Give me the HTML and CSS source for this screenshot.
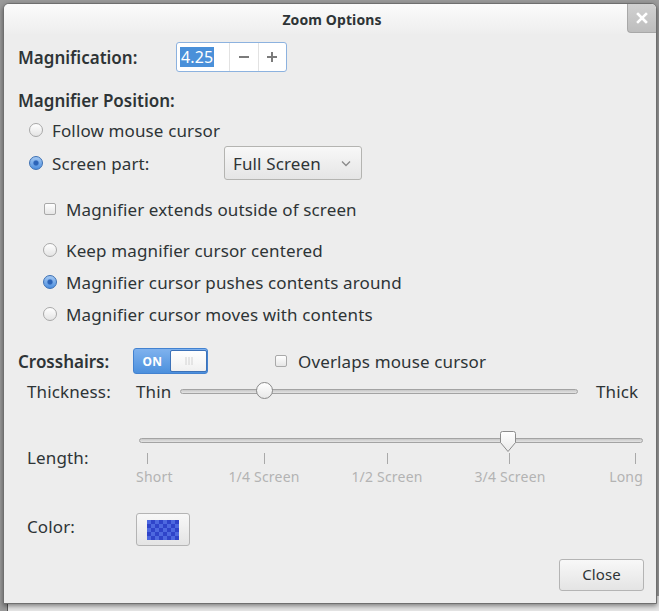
FILE: index.html
```html
<!DOCTYPE html>
<html>
<head>
<meta charset="utf-8">
<link rel="stylesheet" href="styles.css">
</head>
<body>
<div class="behind"></div>
<div class="window">
  <div class="titlebar">
    <span class="title">Zoom Options</span>
    <div class="wclose">
      <svg width="12" height="12" viewBox="0 0 12 12"><path d="M2 2 L10 10 M10 2 L2 10" stroke="#fff" stroke-width="2.6" stroke-linecap="square"/></svg>
    </div>
  </div>
  <div class="content">
    <div class="mag">
      <span class="label bold">Magnification:</span>
      <div class="spin">
        <div class="entry"><span class="sel">4.25</span></div>
        <div class="sbtn"><svg width="12" height="12" viewBox="0 0 12 12"><path d="M1 6 H11" stroke="#7b7b7b" stroke-width="2"/></svg></div>
        <div class="sbtn"><svg width="12" height="12" viewBox="0 0 12 12"><path d="M1 6 H11 M6 1 V11" stroke="#7b7b7b" stroke-width="2"/></svg></div>
      </div>
    </div>

    <div class="section bold">Magnifier Position:</div>

    <div class="opt lvl1 follow"><span class="radio"></span>Follow mouse cursor</div>
    <div class="opt lvl1 screen">
      <span class="radio on"></span>
      <span class="screen-label">Screen part:</span>
      <div class="combo">
        <span>Full Screen</span>
        <svg width="10" height="7" viewBox="0 0 10 7"><path d="M1 1.5 L5 5.5 L9 1.5" fill="none" stroke="#8a8a8a" stroke-width="1.3"/></svg>
      </div>
    </div>

    <div class="opt lvl2 extends"><span class="checkwrap"><span class="check"></span></span>Magnifier extends outside of screen</div>

    <div class="opt lvl2 keep"><span class="radio"></span>Keep magnifier cursor centered</div>
    <div class="opt lvl2 pushes"><span class="radio on"></span>Magnifier cursor pushes contents around</div>
    <div class="opt lvl2 moves"><span class="radio"></span>Magnifier cursor moves with contents</div>

    <div class="cross">
      <span class="cross-label bold">Crosshairs:</span>
      <div class="switch">
        <span class="on-label">ON</span>
        <span class="knob">
          <svg width="10" height="10" viewBox="0 0 10 10"><path d="M2 1 V9 M5 1 V9 M8 1 V9" stroke="#d2d2d2" stroke-width="1"/></svg>
        </span>
      </div>
      <span class="check overlap-check"></span>
      <span class="overlap-text">Overlaps mouse cursor</span>
    </div>

    <div class="thick">
      <span class="sub-label">Thickness:</span>
      <span class="thin-text">Thin</span>
      <div class="hslider">
        <div class="track"></div>
        <span class="round-handle"></span>
      </div>
      <span class="thick-text">Thick</span>
    </div>

    <div class="length">
      <span class="sub-label length-label">Length:</span>
      <div class="scale">
        <div class="scale-slider">
          <div class="track"></div>
          <svg class="ptr-handle" width="18" height="23" viewBox="0 0 18 23">
            <defs><linearGradient id="hg" x1="0" y1="0" x2="0" y2="1"><stop offset="0" stop-color="#ffffff"/><stop offset="1" stop-color="#e9e9e9"/></linearGradient></defs>
            <path d="M1.5 3.5 Q1.5 1.5 3.5 1.5 H14.5 Q16.5 1.5 16.5 3.5 V12.5 L9 21.5 L1.5 12.5 Z" fill="url(#hg)" stroke="#8c8c8c" stroke-width="1"/>
          </svg>
        </div>
        <div class="ticks">
          <span class="tick" style="left:8px"></span>
          <span class="tick" style="left:125px"></span>
          <span class="tick" style="left:248px"></span>
          <span class="tick" style="left:370px"></span>
          <span class="tick" style="left:496px"></span>
        </div>
        <div class="marks">
          <span class="mark first">Short</span>
          <span class="mark mid" style="left:125px">1/4 Screen</span>
          <span class="mark mid" style="left:248px">1/2 Screen</span>
          <span class="mark mid" style="left:371px">3/4 Screen</span>
          <span class="mark last">Long</span>
        </div>
      </div>
    </div>

    <div class="color-row">
      <span class="sub-label color-label">Color:</span>
      <div class="color-btn"><span class="swatch"></span></div>
    </div>

    <div class="actions">
      <div class="close-btn">Close</div>
    </div>
  </div>
</div>
</body>
</html>
```

FILE: styles.css
```css
* { box-sizing: border-box; }
html, body { margin: 0; padding: 0; }
body {
  width: 659px;
  height: 611px;
  overflow: hidden;
  background: #9a9a9a;
  font-family: "Noto Sans", "Open Sans", sans-serif;
  color: #2e3436;
  position: relative;
}
.behind {
  position: absolute;
  left: 7px;
  top: 596px;
  width: 652px;
  height: 30px;
  background: #e6e6e6;
  border-left: 1px solid #555;
}
.window {
  position: relative;
  margin: 3px 0 0 3px;
  width: 654px;
  height: 601px;
  background: #ededed;
  border: 1px solid #6f6f6f;
  border-radius: 6px 6px 0 0;
  box-shadow: 0 2px 5px rgba(0,0,0,0.45);
  display: flex;
  flex-direction: column;
  overflow: hidden;
}
.titlebar {
  position: relative;
  height: 30px;
  flex-shrink: 0;
  display: flex;
  align-items: center;
  justify-content: center;
  background: linear-gradient(#fbfbfb, #eeeeee);
}
.title { font-size: 14px; font-weight: 700; color: #2e3436; letter-spacing: 0.1px; padding-left: 4px; }
.wclose {
  position: absolute;
  right: 0;
  top: -1px;
  width: 29px;
  height: 30px;
  background: linear-gradient(#d2d2d2, #bdbdbd);
  border-left: 1px solid #a8a8a8;
  border-bottom: 1px solid #a8a8a8;
  border-radius: 0 5px 0 4px;
  display: flex;
  align-items: center;
  justify-content: center;
}
.content {
  flex: 1;
  display: flex;
  flex-direction: column;
  padding: 8px 12px 0 14px;
  font-size: 17px;
  letter-spacing: 0.13px;
}
.bold { font-weight: 600; letter-spacing: 0; }

.mag { display: flex; align-items: center; height: 30px; }
.mag .label { width: 158px; }
.spin {
  display: flex;
  width: 111px;
  height: 30px;
  border: 1px solid #8cb2df;
  border-radius: 3px;
  background: #fff;
}
.entry { width: 53px; display: flex; align-items: center; padding-left: 3px; }
.sel {
  background: #4a90d9;
  color: #fff;
  font-size: 16px;
  line-height: 20px;
  padding: 0 1px;
}
.sbtn {
  width: 29px;
  border-left: 1px solid #e2e2e2;
  display: flex;
  align-items: center;
  justify-content: center;
}

.section { margin-top: 17px; height: 24px; line-height: 24px; }

.opt { display: flex; align-items: center; height: 24px; }
.lvl1 { padding-left: 11px; }
.lvl2 { padding-left: 25px; }
.follow { margin-top: 5px; }
.screen { margin-top: 4px; height: 34px; }
.extends { margin-top: 17px; }
.keep { margin-top: 17px; }
.pushes { margin-top: 8px; }
.moves { margin-top: 8px; }

.radio {
  width: 14px;
  height: 14px;
  flex-shrink: 0;
  border-radius: 50%;
  border: 1px solid #a8a8a8;
  background: linear-gradient(#ffffff, #e4e4e4);
  margin-right: 9px;
}
.radio.on {
  border-color: #3b6fb3;
  background: radial-gradient(circle, #2c64b8 0 2px, rgba(44,100,184,0) 3.2px), linear-gradient(#a4c8f2, #4d8fdf);
}
.checkwrap {
  width: 14px;
  height: 14px;
  margin-right: 9px;
  display: flex;
  align-items: center;
  justify-content: center;
  flex-shrink: 0;
}
.check {
  width: 12px;
  height: 12px;
  flex-shrink: 0;
  border: 1px solid #a9a9a9;
  border-radius: 2px;
  background: linear-gradient(#ffffff, #e6e6e6);
}
.screen-label { width: 172px; }
.combo {
  width: 138px;
  height: 34px;
  border: 1px solid #b4b4b1;
  border-radius: 3px;
  background: linear-gradient(#f8f8f8, #e5e5e5);
  display: flex;
  align-items: center;
  justify-content: space-between;
  padding: 0 10px 0 8px;
}

.cross { display: flex; align-items: center; height: 26px; margin-top: 22px; }
.cross-label { width: 115px; }
.switch {
  width: 75px;
  height: 26px;
  display: flex;
  align-items: stretch;
  padding: 1px 0 1px 1px;
  border: 1px solid #4382d0;
  border-radius: 3px;
  background: linear-gradient(#7fb2ee, #4c90dd);
}
.on-label {
  flex: 1;
  display: flex;
  align-items: center;
  justify-content: center;
  color: #fff;
  font-weight: 700;
  font-size: 12px;
  letter-spacing: 0.5px;
}
.knob {
  width: 37px;
  background: linear-gradient(#ffffff, #f0f0f0);
  border: 1px solid #3d72b8;
  border-radius: 2px;
  display: flex;
  align-items: center;
  justify-content: center;
}
.overlap-check { margin-left: 67px; }
.overlap-text { margin-left: 11px; }

.sub-label { width: 109px; flex-shrink: 0; }
.thick {
  display: flex;
  align-items: center;
  height: 24px;
  margin-top: 5px;
  padding-left: 9px;
}
.thin-text { width: 44px; }
.hslider { position: relative; width: 398px; height: 24px; display: flex; align-items: center; }
.track {
  width: 100%;
  height: 5px;
  border: 1px solid #a3a3a3;
  border-radius: 3px;
  background: linear-gradient(#c8c8c8, #e4e4e4);
}
.round-handle {
  position: absolute;
  left: 76px;
  top: 3px;
  width: 17px;
  height: 17px;
  border-radius: 50%;
  border: 1px solid #8a8a8a;
  background: linear-gradient(#ffffff, #e8e8e8);
}
.thick-text { margin-left: 18px; }

.length {
  display: flex;
  margin-top: 22px;
  padding-left: 9px;
}
.length-label { width: 112px; padding-top: 21px; }
.scale { width: 504px; position: relative; }
.scale-slider { position: relative; height: 28px; display: flex; align-items: center; padding-top: 2px; }
.ptr-handle { position: absolute; left: 360px; top: 5px; }
.ticks { position: relative; height: 11px; }
.tick {
  position: absolute;
  top: 0;
  width: 1px;
  height: 11px;
  background: #a9a9a9;
}
.marks { position: relative; height: 18px; margin-top: 4px; font-size: 14px; letter-spacing: 0.2px; color: #b3b3b3; }
.mark { position: absolute; top: 0; line-height: 18px; white-space: nowrap; }
.mark.mid { transform: translateX(-50%); }
.mark.first { left: -3px; }
.mark.last { right: 0; }

.color-row {
  display: flex;
  align-items: center;
  margin-top: 27px;
  padding-left: 9px;
  height: 33px;
}
.color-label { padding-bottom: 6px; }
.color-btn {
  width: 54px;
  height: 33px;
  border: 1px solid #b4b4b4;
  border-radius: 3px;
  background: linear-gradient(#f8f8f8, #e4e4e4);
  display: flex;
  align-items: center;
  justify-content: center;
}
.swatch {
  width: 32px;
  height: 20px;
  background: repeating-conic-gradient(#2f44c9 0 25%, #4d68df 0 50%) 0 0 / 8px 8px;
}

.actions { display: flex; justify-content: flex-end; margin-top: 13px; }
.close-btn {
  width: 85px;
  height: 32px;
  padding-bottom: 3px;
  border: 1px solid #b4b4b4;
  border-radius: 3px;
  background: linear-gradient(#f8f8f8, #e4e4e4);
  display: flex;
  align-items: center;
  justify-content: center;
  font-size: 15px;
}
```
